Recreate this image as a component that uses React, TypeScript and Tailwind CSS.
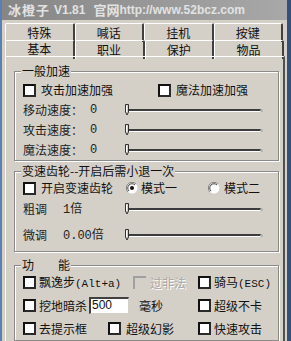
import React from 'react';

const CJK = '"Noto Sans CJK SC", "Noto Sans", sans-serif';
const MONO = '"Liberation Mono", "Noto Sans CJK SC", monospace';

function Check({ disabled }: { disabled?: boolean }) {
  if (disabled)
    return <div className="w-[13px] h-[13px] shrink-0 border-t-2 border-l-2 border-[#a0a0a0]" />;
  return (
    <div className="w-[13px] h-[13px] shrink-0 bg-white border-2 border-t-[#111] border-l-[#111] border-r-[#2a2a2a] border-b-[#2a2a2a]" />
  );
}

function Radio({ on }: { on?: boolean }) {
  return (
    <svg width="12" height="12" viewBox="0 0 12 12" className="shrink-0">
      <circle cx="6" cy="6" r="5.5" fill="#fff" />
      <path d="M10 2 A5.5 5.5 0 0 0 2 10" stroke="#808080" strokeWidth="1" fill="none" />
      <path d="M9 3 A4 4 0 0 0 3 9" stroke="#404040" strokeWidth="1" fill="none" />
      {on && <circle cx="6" cy="6" r="2" fill="#111" />}
    </svg>
  );
}

function Slider() {
  return (
    <div className="relative w-[138px] h-[14px] shrink-0">
      <div className="absolute left-0 right-[2px] top-[6px] h-[3px] border-t-2 border-[#3c3c3c] border-b border-b-white" />
      <svg width="6" height="12" viewBox="0 0 6 12" className="absolute left-0 top-[1px]">
        <path d="M0.5 0.5 H3.5 V8 L2 11 L0.5 8 Z" fill="#d4d0c8" stroke="#303030" strokeWidth="1" />
        <path d="M1.5 1.5 V8" stroke="#fff" strokeWidth="1" />
      </svg>
      <div className="absolute right-0 top-[6px] w-[3px] h-[3px] rounded-full bg-[#b0b0b0]" />
    </div>
  );
}

function Group({ label, className, children }: { label: React.ReactNode; className?: string; children: React.ReactNode }) {
  return (
    <div className={`relative border border-[#8a8a8a] shadow-[1px_1px_0_#ffffff,inset_1px_1px_0_#ffffff] ${className ?? ''}`}>
      <div className="absolute -top-[9px] left-[6px] bg-[#d4d0c8] px-[1px] text-[12px] leading-[16px] text-[#111]">{label}</div>
      {children}
    </div>
  );
}

function Tab({ children, sel }: { children: React.ReactNode; sel?: boolean }) {
  return (
    <div
      className={`flex items-center justify-center border-t border-l border-white border-r-2 border-r-[#404040] rounded-tl-[2px] rounded-tr-[2px] text-[12px] text-[#111] ${
        sel ? 'bg-[#d4d0c8]' : ''
      }`}
    >
      {children}
    </div>
  );
}

export default function App() {
  return (
    <div className="w-[291px] h-[341px] overflow-hidden bg-[#d4d0c8] flex" style={{ fontFamily: CJK }}>
      <div className="w-[2px] bg-[#5b7fb3] shrink-0" />
      <div className="flex-1 flex flex-col min-w-0">
        <div className="h-[21px] bg-gradient-to-r from-[#868686] to-[#a8a8a8] flex items-center pl-[6px] text-[13px] font-bold text-[#e2e2e2] whitespace-nowrap">
          <span className="tracking-[1px]">冰橙子</span>
          <span className="ml-[4px] text-[12px]" style={{ fontFamily: '"Liberation Sans", sans-serif' }}>V1.81</span>
          <span className="ml-[8px]">官网</span>
          <span className="text-[12px]" style={{ fontFamily: '"Liberation Sans", sans-serif' }}>http://www.52bcz.com</span>
        </div>
        <div className="pl-[3px] pr-[2px] pt-[3px] flex-1 flex flex-col">
          <div className="grid grid-cols-4 h-[17px] pr-[2px]">
            <Tab>特殊</Tab>
            <Tab>喊话</Tab>
            <Tab>挂机</Tab>
            <Tab>按键</Tab>
          </div>
          <div className="grid grid-cols-4 h-[16px] pr-[1px]">
            <Tab sel>
              <span className="-mt-[3px]">基本</span>
            </Tab>
            <Tab>职业</Tab>
            <Tab>保护</Tab>
            <Tab>物品</Tab>
          </div>
          <div className="flex-1 border-l border-t border-white border-r-2 border-r-[#505050] pl-[8px] pr-[4px] pt-[14px] flex flex-col">
            <Group label="一般加速" className="h-[90px] pl-[8px] pt-[8px]">
              <div className="h-[20px] flex items-center text-[12px] text-[#111]">
                <div className="w-[135px] flex items-center gap-[5px]">
                  <Check />
                  <span>攻击加速加强</span>
                </div>
                <div className="flex items-center gap-[5px]">
                  <Check />
                  <span>魔法加速加强</span>
                </div>
              </div>
              {['移动速度：', '攻击速度：', '魔法速度：'].map((t) => (
                <div key={t} className="h-[20px] flex items-center text-[12px] text-[#222]">
                  <span className="w-[67px]">{t}</span>
                  <span className="w-[35px]" style={{ fontFamily: MONO, fontSize: 12 }}>0</span>
                  <Slider />
                </div>
              ))}
            </Group>
            <Group label="变速齿轮--开启后需小退一次" className="mt-[10px] h-[81px] pl-[8px] pt-[6px]">
              <div className="h-[20px] flex items-center text-[12px] text-[#111]">
                <div className="w-[103px] flex items-center gap-[5px]">
                  <Check />
                  <span>开启变速齿轮</span>
                </div>
                <div className="w-[82px] flex items-center gap-[3px]">
                  <Radio on />
                  <span>模式一</span>
                </div>
                <div className="flex items-center gap-[4px]">
                  <Radio />
                  <span>模式二</span>
                </div>
              </div>
              <div className="h-[22px] flex items-center text-[12px] text-[#222]">
                <span className="w-[40px]">粗调</span>
                <span className="w-[62px]" style={{ fontFamily: MONO, fontSize: 12 }}>
                  1<span style={{ fontFamily: CJK, fontSize: 12 }}>倍</span>
                </span>
                <Slider />
              </div>
              <div className="h-[22px] mt-[4px] flex items-center text-[12px] text-[#222]">
                <span className="w-[40px]">微调</span>
                <span className="w-[62px]" style={{ fontFamily: MONO, fontSize: 12 }}>
                  0.00<span style={{ fontFamily: CJK, fontSize: 12 }}>倍</span>
                </span>
                <Slider />
              </div>
            </Group>
            <Group
              label={
                <span>
                  功<span className="ml-[24px]">能</span>
                </span>
              }
              className="mt-[13px] flex-1 pl-[8px] pt-[5px]"
            >
              <div className="h-[23px] flex items-center text-[12px] text-[#111]">
                <div className="w-[110px] flex items-center gap-[3px]">
                  <Check />
                  <span>
                    飘逸步<span style={{ fontFamily: MONO, fontSize: 11 }}>(Alt+a)</span>
                  </span>
                </div>
                <div className="w-[65px] flex items-center gap-[4px]">
                  <Check disabled />
                  <span className="text-[#a8a8a8] [text-shadow:1px_1px_0_#fff]">过非法</span>
                </div>
                <div className="flex items-center gap-[3px]">
                  <Check />
                  <span>
                    骑马<span style={{ fontFamily: MONO, fontSize: 11 }}>(ESC)</span>
                  </span>
                </div>
              </div>
              <div className="h-[23px] flex items-center text-[12px] text-[#111]">
                <div className="w-[175px] flex items-center">
                  <Check />
                  <span className="ml-[3px]">挖地暗杀</span>
                  <div className="ml-[2px] w-[40px] h-[17px] bg-white border-t-2 border-l-2 border-[#404040] border-b border-r border-b-[#d4d0c8] border-r-[#d4d0c8] text-[12px] leading-[13px] pl-[1px]" style={{ fontFamily: '"Liberation Sans", sans-serif' }}>
                    500
                  </div>
                  <span className="ml-[10px]">毫秒</span>
                </div>
                <div className="flex items-center gap-[3px]">
                  <Check />
                  <span>超级不卡</span>
                </div>
              </div>
              <div className="h-[23px] flex items-center text-[12px] text-[#111]">
                <div className="w-[85px] flex items-center gap-[3px]">
                  <Check />
                  <span>去提示框</span>
                </div>
                <div className="w-[90px] flex items-center gap-[5px]">
                  <Check />
                  <span>超级幻影</span>
                </div>
                <div className="flex items-center gap-[3px]">
                  <Check />
                  <span>快速攻击</span>
                </div>
              </div>
            </Group>
          </div>
        </div>
      </div>
      <div className="w-[4px] bg-[#34507a] shrink-0" />
    </div>
  );
}
